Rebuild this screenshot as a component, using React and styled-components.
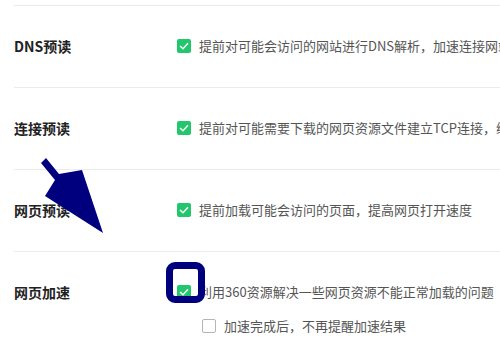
import React from 'react'
import styled, { createGlobalStyle } from 'styled-components'

const GlobalStyle = createGlobalStyle`
  html, body {
    margin: 0;
    padding: 0;
    background: #fff;
  }
  body {
    font-family: "Noto Sans CJK SC", "Noto Sans", sans-serif;
    overflow: hidden;
  }
`

const rows = [
  { label: 'DNS预读', options: [{ text: '提前对可能会访问的网站进行DNS解析，加速连接网站速度', checked: true }] },
  { label: '连接预读', options: [{ text: '提前对可能需要下载的网页资源文件建立TCP连接，缩短加载时间', checked: true }] },
  { label: '网页预读', options: [{ text: '提前加载可能会访问的页面，提高网页打开速度', checked: true }] },
  {
    label: '网页加速',
    options: [
      { text: '利用360资源解决一些网页资源不能正常加载的问题', checked: true },
      { text: '加速完成后，不再提醒加速结果', checked: false, sub: true },
    ],
  },
]

const Check = ({ checked }) => (
  <Box checked={checked}>
    {checked && (
      <svg width="10" height="8" viewBox="0 0 10 8">
        <path d="M1 4 L4 6.8 L9 1.2" fill="none" stroke="#fff" strokeWidth="1.5" />
      </svg>
    )}
  </Box>
)

const App = () => (
  <Page>
    <GlobalStyle />
    <List>
      {rows.map((row) => (
        <Row key={row.label}>
          <Label>{row.label}</Label>
          <Options>
            {row.options.map((o) => (
              <Option key={o.text} sub={o.sub}>
                <Check checked={o.checked} />
                <Text>{o.text}</Text>
              </Option>
            ))}
          </Options>
        </Row>
      ))}
    </List>

    <Arrow width="120" height="90" viewBox="0 0 120 90">
      <polygon
        points="21,13 26,8 39,24 62,20 83,83 25,46 35,30"
        fill="#00007f"
      />
    </Arrow>
    <Highlight />
  </Page>
)

var Page = styled.div`
  position: relative;
  width: 500px;
  height: 350px;
  overflow: hidden;
  background: #fff;
`

var List = styled.div`
  padding-top: 5px;
  padding-left: 14px;
`

var Row = styled.div`
  display: grid;
  grid-template-columns: 163px 1fr;
  align-items: start;
  height: 82px;
  box-sizing: border-box;
  border-top: 1px solid #ececec;
  padding-top: 31px;
`

var Label = styled.div`
  font-size: 14px;
  line-height: 18px;
  font-weight: bold;
  color: #222;
  white-space: nowrap;
`

var Options = styled.div`
  display: flex;
  flex-direction: column;
  gap: 16px;
`

var Option = styled.div`
  display: flex;
  align-items: center;
  gap: 8px;
  height: 18px;
  padding-left: ${({ sub }) => (sub ? '25px' : '0')};
`

var Box = styled.span`
  display: inline-flex;
  align-items: center;
  justify-content: center;
  flex: none;
  width: 14px;
  height: 14px;
  box-sizing: border-box;
  border-radius: 2px;
  background: ${({ checked }) => (checked ? '#22c76c' : '#fff')};
  border: ${({ checked }) => (checked ? 'none' : '1px solid #b5b5b5')};
`

var Text = styled.span`
  font-size: 13px;
  line-height: 18px;
  color: #555;
  white-space: nowrap;
`

var Arrow = styled.svg`
  position: absolute;
  left: 20px;
  top: 150px;
`

var Highlight = styled.div`
  position: absolute;
  left: 166px;
  top: 262px;
  width: 39px;
  height: 41px;
  box-sizing: border-box;
  border: 7px solid #00007f;
  border-radius: 9px;
`

export default App
